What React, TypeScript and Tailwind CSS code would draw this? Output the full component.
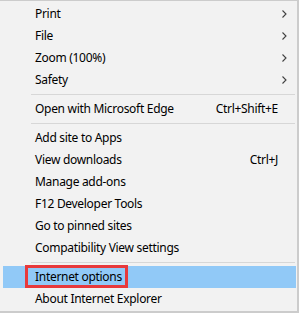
import { type ReactNode } from 'react';

type Item =
  | { kind: 'item'; label: string; shortcut?: string; submenu?: boolean; active?: boolean }
  | { kind: 'sep' };

const items: Item[] = [
  { kind: 'item', label: 'Print', submenu: true },
  { kind: 'item', label: 'File', submenu: true },
  { kind: 'item', label: 'Zoom (100%)', submenu: true },
  { kind: 'item', label: 'Safety', submenu: true },
  { kind: 'sep' },
  { kind: 'item', label: 'Open with Microsoft Edge', shortcut: 'Ctrl+Shift+E' },
  { kind: 'sep' },
  { kind: 'item', label: 'Add site to Apps' },
  { kind: 'item', label: 'View downloads', shortcut: 'Ctrl+J' },
  { kind: 'item', label: 'Manage add-ons' },
  { kind: 'item', label: 'F12 Developer Tools' },
  { kind: 'item', label: 'Go to pinned sites' },
  { kind: 'item', label: 'Compatibility View settings' },
  { kind: 'sep' },
  { kind: 'item', label: 'Internet options', active: true },
  { kind: 'item', label: 'About Internet Explorer' },
];

function Chevron() {
  return (
    <svg width="5" height="8" viewBox="0 0 5 8" className="shrink-0">
      <path d="M0.5 0.5 L4 4 L0.5 7.5" fill="none" stroke="#404040" strokeWidth="1.1" />
    </svg>
  );
}

function Row({ children, active }: { children: ReactNode; active?: boolean }) {
  return (
    <div
      className={`relative flex h-[22px] items-center pl-[32px] ${active ? 'bg-[#91c9f7]' : ''}`}
    >
      {children}
    </div>
  );
}

export default function App() {
  return (
    <div
      className="relative w-[299px] h-[313px] overflow-hidden border-t border-r-2 border-b-2 border-[#cccccc] bg-[#f2f2f2] pt-[2px] pl-[3px] pr-[1px] text-[12px] tracking-[-0.3px] text-black"
      style={{ fontFamily: '"Segoe UI", "Noto Sans", sans-serif' }}
    >
      {items.map((item, i) =>
        item.kind === 'sep' ? (
          <div key={i} className="flex h-[7px] items-center pl-[28px] pr-[1px]">
            <div className="h-px w-full bg-[#d7d7d7]" />
          </div>
        ) : (
          <Row key={i} active={item.active}>
            <span className="whitespace-nowrap leading-none">{item.label}</span>
            {item.shortcut && (
              <span className="ml-auto pr-[18px] whitespace-nowrap leading-none">{item.shortcut}</span>
            )}
            {item.submenu && (
              <span className="ml-auto pr-[9px] flex items-center">
                <Chevron />
              </span>
            )}
            {item.active && (
              <div className="absolute left-[22px] top-[-1px] h-[23px] w-[103px] border-[3px] border-[#e8393b]" />
            )}
          </Row>
        )
      )}
    </div>
  );
}
